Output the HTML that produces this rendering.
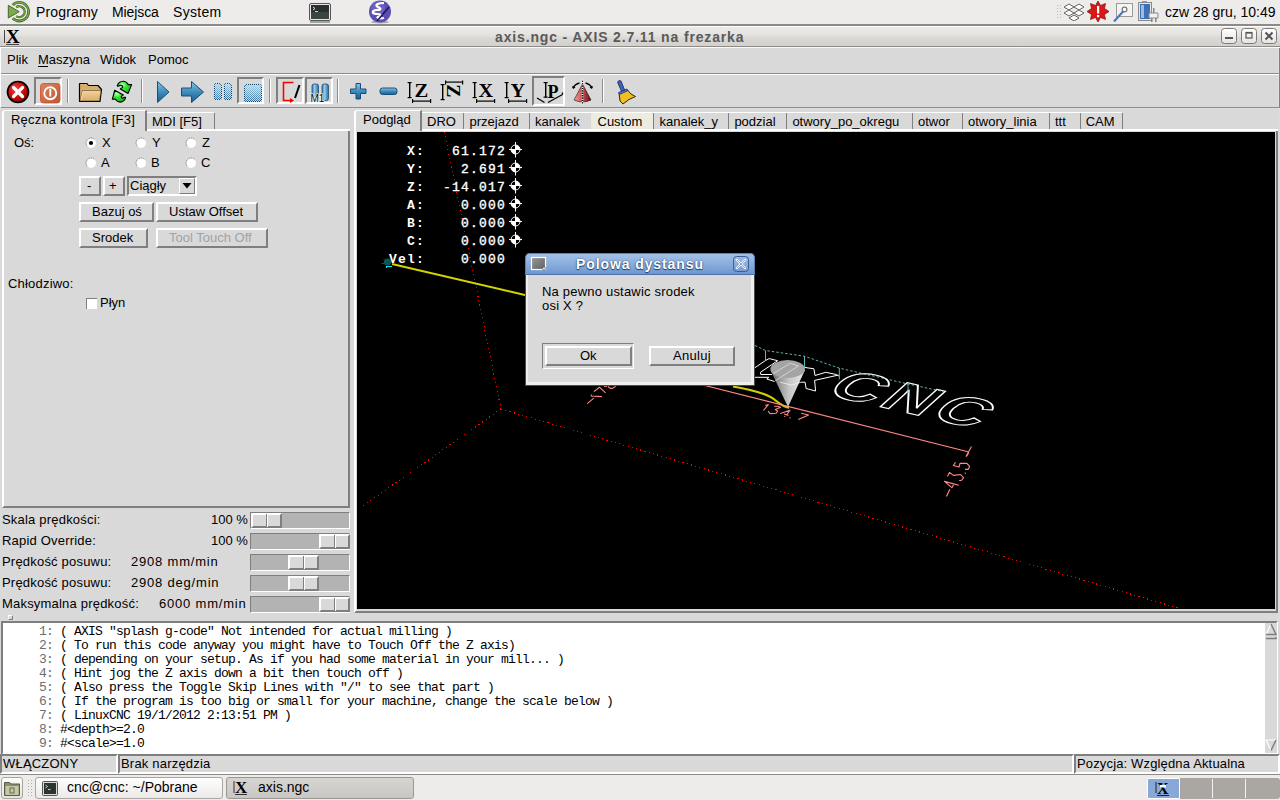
<!DOCTYPE html>
<html><head><meta charset="utf-8">
<style>
*{margin:0;padding:0;box-sizing:border-box}
html,body{width:1280px;height:800px;overflow:hidden;background:#d9d9d9;font-family:"Liberation Sans",sans-serif;font-size:13px;color:#000}
.a{position:absolute}
.t{position:absolute;white-space:pre;line-height:13px;font-size:13px}
.raised{position:absolute;background:#d9d9d9;border-style:solid;border-width:2px;border-color:#fff #7f7f7f #7f7f7f #fff}
.sunk{position:absolute;border-style:solid;border-width:2px;border-color:#7f7f7f #fff #fff #7f7f7f}
.sunk1{position:absolute;border-style:solid;border-width:1px;border-color:#7f7f7f #fff #fff #7f7f7f}
.mono{font-family:"Liberation Mono",monospace}
</style></head><body>

<!-- ===== TOP GNOME PANEL ===== -->
<div class="a" style="left:0;top:0;width:1280px;height:24px;background:#edeceb"></div>
<div class="a" style="left:0;top:24px;width:1280px;height:2px;background:#8e8a86"></div>

<svg class="a" style="left:4px;top:0" width="28" height="24" viewBox="0 0 28 24">
 <g fill="none" stroke-linecap="butt">
 <path d="M8.72 5.12 A9.3 9.3 0 1 1 8.72 18.28" stroke="#46682c" stroke-width="2.8"/>
 <path d="M8.72 5.12 A9.3 9.3 0 1 1 8.72 18.28" stroke="#7fb04c" stroke-width="1.1"/>
 <path d="M12.2 7.28 A5.4 5.4 0 1 1 12.2 16.12" stroke="#46682c" stroke-width="2.4"/>
 <path d="M12.2 7.28 A5.4 5.4 0 1 1 12.2 16.12" stroke="#7fb04c" stroke-width="1"/>
 </g>
 <path d="M4.3 5.3 L15.2 11.7 L4.3 18 Z" fill="#7aad45" stroke="#3f5a2a" stroke-width="0.9" stroke-linejoin="round"/>
</svg>
<div class="t" style="left:36px;top:5px;font-size:14px;line-height:14px;letter-spacing:0.15px">Programy</div>
<div class="t" style="left:112px;top:5px;font-size:14px;line-height:14px;letter-spacing:-0.1px">Miejsca</div>
<div class="t" style="left:173px;top:5px;font-size:14px;line-height:14px;letter-spacing:0.3px">System</div>
<svg class="a" style="left:308px;top:2px" width="24" height="21" viewBox="0 0 24 21">
 <rect x="1.5" y="1.5" width="21" height="17" rx="1.5" fill="#e8e8e8" stroke="#555" stroke-width="1"/>
 <rect x="3" y="3" width="18" height="14" fill="#2a302e"/>
 <rect x="3" y="10" width="18" height="7" fill="#3d4542"/>
 <path d="M5 5 L7 6.5 L5 8" fill="none" stroke="#ddd" stroke-width="1"/>
 <rect x="7" y="9" width="3" height="1" fill="#ccc"/>
 <rect x="2" y="19" width="20" height="2" fill="#777" opacity="0.6"/>
</svg>
<svg class="a" style="left:368px;top:0" width="24" height="24" viewBox="0 0 24 24">
 <ellipse cx="12" cy="22" rx="9" ry="1.5" fill="#333" opacity="0.35"/>
 <circle cx="12" cy="11.5" r="11" fill="#5a4fb0"/>
 <circle cx="10" cy="8" r="7" fill="#7a70c8" opacity="0.5"/>
 <path d="M16 3 C10 3 6 5 10 7 C14 9 13 10 8 10 C3 11 4 14 9 14 C14 14 14 16 10 17 C8 18 12 19 16 18" fill="none" stroke="#fff" stroke-width="2.2"/>
 <path d="M21 7 L9 21" stroke="#1a1860" stroke-width="1.6"/>
</svg>
<!-- tray -->
<div class="a" style="left:1056px;top:4px;width:5px;height:16px;background:radial-gradient(circle,#b8b6b2 0.6px,transparent 0.9px) 0 0/3px 3px"></div>
<svg class="a" style="left:1063px;top:3px" width="22" height="18" viewBox="0 0 22 18">
 <g fill="#fafafa" stroke="#555" stroke-width="0.9">
 <path d="M6 1 L11 4 L6 7 L1 4 Z"/><path d="M16 1 L21 4 L16 7 L11 4 Z"/>
 <path d="M6 7 L11 10 L6 13 L1 10 Z"/><path d="M16 7 L21 10 L16 13 L11 10 Z"/>
 <path d="M11 12 L16 15 L11 18 L6 15 Z"/></g>
</svg>
<svg class="a" style="left:1086px;top:0" width="24" height="24" viewBox="0 0 24 24">
 <path d="M12 1 L14.5 5.5 L19.5 3.5 L18.5 8.5 L23 11.5 L18.5 14.5 L19.5 19.5 L14.5 17.5 L12 22 L9.5 17.5 L4.5 19.5 L5.5 14.5 L1 11.5 L5.5 8.5 L4.5 3.5 L9.5 5.5 Z" fill="#d81818" stroke="#8a0c0c" stroke-width="0.7"/>
 <rect x="11" y="6" width="2.2" height="7.5" fill="#fff"/><rect x="11" y="15" width="2.2" height="2.2" fill="#fff"/>
</svg>
<svg class="a" style="left:1113px;top:3px" width="22" height="19" viewBox="0 0 22 19">
 <rect x="3.5" y="0.5" width="16" height="13" fill="#f4f4f2" stroke="#9a9a98"/>
 <circle cx="11.5" cy="6.5" r="2.4" fill="#fff" stroke="#777" stroke-width="1.2"/>
 <path d="M10.5 8 L1 18.5" stroke="#4a78c0" stroke-width="2.2"/>
</svg>
<svg class="a" style="left:1137px;top:0" width="24" height="24" viewBox="0 0 24 24">
 <rect x="5" y="1" width="5" height="2" fill="#9a9a9a"/>
 <rect x="1.5" y="2.5" width="13" height="18" fill="#e6e6e6" stroke="#8a8a8a"/>
 <rect x="3" y="4" width="10" height="15" fill="#3f6fb5"/>
 <rect x="4" y="5" width="3" height="13" fill="#9fbce0"/>
 <path d="M12 13 h9 v5 h-9 z" fill="#f0f0f0" stroke="#888"/>
 <rect x="14" y="18" width="1.6" height="4" fill="#888"/><rect x="18" y="18" width="1.6" height="4" fill="#888"/>
 <rect x="16" y="8" width="1.5" height="5" fill="#888"/>
</svg>
<div class="t" style="left:1165px;top:5px;font-size:14px;line-height:14px">czw 28 gru, 10:49</div>


<!-- ===== TITLE BAR ===== -->
<div class="a" style="left:0;top:26px;width:1280px;height:20px;background:linear-gradient(#ecebe9,#e4e3e0 45%,#dad8d4 60%,#d3d1cd)"></div>
<div class="a" style="left:0;top:26px;width:1280px;height:1px;background:#fbfbfa"></div>
<div class="a" style="left:0;top:46px;width:1280px;height:1px;background:#8e8a86"></div>
<div class="a" style="left:0;top:47px;width:1280px;height:1px;background:#fafafa"></div>
<div class="t" style="left:495px;top:30px;font-size:14px;line-height:14px;font-weight:bold;color:#5a5a5a;letter-spacing:0.85px">axis.ngc - AXIS 2.7.11 na frezarka</div>

<svg class="a" style="left:2px;top:27px" width="22" height="20" viewBox="0 0 22 20">
 <text x="4" y="16" font-family="Liberation Serif" font-weight="bold" font-size="19" fill="#000">X</text>
 <rect x="2" y="3" width="1" height="13" fill="#444"/>
 <rect x="4" y="17" width="13" height="1" fill="#444"/>
</svg>
<svg class="a" style="left:1220px;top:27px" width="58" height="18" viewBox="0 0 58 18">
 <defs><linearGradient id="wb" x1="0" y1="0" x2="0" y2="1"><stop offset="0" stop-color="#fff"/><stop offset="1" stop-color="#e4e3e1"/></linearGradient></defs>
 <rect x="1.5" y="1.5" width="15" height="15" rx="3" fill="url(#wb)" stroke="#7d7974"/>
 <rect x="5" y="10" width="8" height="2" fill="#555"/>
 <rect x="21.5" y="1.5" width="15" height="15" rx="3" fill="url(#wb)" stroke="#7d7974"/>
 <rect x="26" y="5.5" width="6" height="5.5" fill="none" stroke="#555" stroke-width="1.2"/><rect x="26" y="5" width="6" height="1.6" fill="#555"/>
 <rect x="41.5" y="1.5" width="15" height="15" rx="3" fill="url(#wb)" stroke="#7d7974"/>
 <path d="M45.5 5.5 L52.5 12.5 M52.5 5.5 L45.5 12.5" stroke="#555" stroke-width="2"/>
</svg>


<!-- ===== APP WINDOW ===== -->
<div class="a" style="left:0;top:47px;width:1px;height:60px;background:#fff"></div>
<div class="a" style="left:1278px;top:48px;width:1px;height:59px;background:#e0e0e0"></div>
<div class="a" style="left:1279px;top:48px;width:1px;height:60px;background:#7f7f7f"></div>
<div class="a" style="left:1278px;top:108px;width:2px;height:513px;background:#dcdcdc"></div>

<!-- menubar -->
<div class="a" style="left:1px;top:73px;width:1279px;height:1px;background:#8c8c8c"></div>
<div class="a" style="left:0;top:74px;width:1279px;height:1px;background:#fff"></div>
<div class="t" style="left:7px;top:53px">Plik</div>
<div class="t" style="left:38px;top:53px">Maszyna</div>
<div class="a" style="left:38px;top:66px;width:10px;height:1px;background:#000"></div>
<div class="t" style="left:100px;top:53px">Widok</div>
<div class="t" style="left:148px;top:53px">Pomoc</div>

<!-- toolbar bottom -->
<div class="a" style="left:1px;top:107px;width:1279px;height:1px;background:#8c8c8c"></div>
<div class="a" style="left:0;top:108px;width:1280px;height:1px;background:#dedede"></div>

<!-- stop -->
<svg class="a" style="left:5px;top:79px" width="26" height="26" viewBox="0 0 26 26">
 <defs><radialGradient id="rg1" cx="0.4" cy="0.35" r="0.7"><stop offset="0" stop-color="#f04040"/><stop offset="0.6" stop-color="#c80c0c"/><stop offset="1" stop-color="#7a0000"/></radialGradient></defs>
 <circle cx="13" cy="13" r="10.5" fill="url(#rg1)" stroke="#000" stroke-width="1.6"/>
 <path d="M8.5 8.5 L17.5 17.5 M17.5 8.5 L8.5 17.5" stroke="#fff" stroke-width="3.2" stroke-linecap="round"/>
</svg>
<div class="sunk" style="left:34px;top:77px;width:28px;height:28px"></div>
<svg class="a" style="left:40px;top:83px" width="21" height="21" viewBox="0 0 21 21">
 <defs><linearGradient id="lg1" x1="0" y1="0" x2="1" y2="1"><stop offset="0" stop-color="#e0845a"/><stop offset="1" stop-color="#b85a35"/></linearGradient></defs>
 <rect x="0.5" y="0.5" width="19.5" height="19.5" rx="3" fill="url(#lg1)" stroke="#d24a2a" stroke-width="0.8"/>
 <circle cx="10.25" cy="10.25" r="6" fill="none" stroke="#fff" stroke-width="1.8"/>
 <rect x="9.4" y="6" width="1.8" height="7.5" fill="#fff"/>
</svg>
<div class="a" style="left:67px;top:79px;width:1px;height:24px;background:#8c8c8c"></div><div class="a" style="left:68px;top:79px;width:1px;height:24px;background:#fff"></div>
<!-- folder -->
<svg class="a" style="left:78px;top:82px" width="25" height="21" viewBox="0 0 25 21">
 <defs><linearGradient id="fg" x1="0" y1="0" x2="0" y2="1"><stop offset="0" stop-color="#f2d39c"/><stop offset="1" stop-color="#d9ad6a"/></linearGradient></defs>
 <path d="M1.5 1.5 H9 L10.5 3.5 H20 L23.5 7.5 L22 19.5 H1.5 Z" fill="#d8ae6e" stroke="#000" stroke-width="1.2" stroke-linejoin="round"/>
 <path d="M2 19 L4.5 8.5 H23 L21.5 19 Z" fill="url(#fg)" stroke="#3a2a10" stroke-width="0.5"/>
 <path d="M3 18.5 L5 9.5" stroke="#fff4dc" stroke-width="0.8" opacity="0.8"/>
</svg>
<!-- reload -->
<svg class="a" style="left:110px;top:79px" width="24" height="25" viewBox="0 0 24 25">
 <defs><radialGradient id="gg" cx="0.35" cy="0.3" r="0.8"><stop offset="0" stop-color="#c8ffc8"/><stop offset="0.35" stop-color="#38e838"/><stop offset="1" stop-color="#10b010"/></radialGradient></defs>
 <path d="M7.2 6.7 C8 4.5 10.5 2.5 13.1 2.3 C15 2.2 17.2 3.8 18.4 5.6 L21.6 5.6 L18.1 14.4 L10.3 10 L12.5 8.4 C12.8 7.6 12.6 7 12.2 6.9 C11.5 6.3 10.8 6.3 10.3 6.4 C9.3 6.6 8.5 7 7.8 7.3 Z" fill="url(#gg)" stroke="#000" stroke-width="1.1" stroke-linejoin="round"/>
 <path d="M15.6 18.4 C15.2 20.3 14.5 21.1 13.75 21.6 C12.7 22.6 11.4 23.1 10.3 23.1 C8.9 23.1 7.8 22.6 6.9 21.9 C6.2 21.3 5.6 20.6 5.3 20 L2.3 20.3 L4.7 11.25 L13.4 15.9 L11.25 17.5 C11.3 18.3 11.5 18.9 11.9 19.1 C12.6 19.3 13.4 18.9 14 18.4 Z" fill="url(#gg)" stroke="#000" stroke-width="1.1" stroke-linejoin="round"/>
</svg>
<div class="a" style="left:141px;top:79px;width:1px;height:24px;background:#8c8c8c"></div><div class="a" style="left:142px;top:79px;width:1px;height:24px;background:#fff"></div>
<!-- play -->
<svg class="a" style="left:155px;top:80px" width="16" height="24" viewBox="0 0 16 24">
 <defs><linearGradient id="bl" x1="0" y1="0" x2="0" y2="1"><stop offset="0" stop-color="#8cc4e4"/><stop offset="0.5" stop-color="#3c8cbc"/><stop offset="1" stop-color="#1c5c8c"/></linearGradient></defs>
 <path d="M2.5 1.5 L14 12 L2.5 22.5 Z" fill="url(#bl)" stroke="#1a4e78" stroke-width="1" stroke-linejoin="round"/>
</svg>
<svg class="a" style="left:180px;top:80px" width="25" height="24" viewBox="0 0 25 24">
 <path d="M1.5 8 h10 v-6.5 L23.5 12 L11.5 22.5 v-6.5 h-10 z" fill="url(#bl)" stroke="#1a4e78" stroke-width="1" stroke-linejoin="round"/>
</svg>
<!-- pause dotted -->
<svg class="a" style="left:212px;top:82px" width="21" height="20" viewBox="0 0 21 20">
 <defs>
  <pattern id="ck" width="2" height="2" patternUnits="userSpaceOnUse"><rect width="1" height="1" fill="#fff"/><rect x="1" y="1" width="1" height="1" fill="#fff"/></pattern>
  <mask id="ckm"><rect width="40" height="40" fill="url(#ck)"/></mask>
  <linearGradient id="pg" x1="0" y1="0" x2="0" y2="1"><stop offset="0" stop-color="#b8e0ee"/><stop offset="1" stop-color="#2a6a9c"/></linearGradient>
 </defs>
 <g mask="url(#ckm)">
  <rect x="2" y="1" width="8" height="17" rx="2" fill="url(#pg)"/>
  <rect x="12" y="1" width="8" height="17" rx="2" fill="url(#pg)"/>
  <rect x="2.5" y="1.5" width="7" height="16" rx="2" fill="none" stroke="#0e3c64" stroke-width="1"/>
  <rect x="12.5" y="1.5" width="7" height="16" rx="2" fill="none" stroke="#0e3c64" stroke-width="1"/>
 </g>
</svg>
<div class="sunk" style="left:237px;top:77px;width:27px;height:27px"></div>
<svg class="a" style="left:243px;top:83px" width="20" height="20" viewBox="0 0 20 20">
 <g mask="url(#ckm)">
  <rect x="1" y="1" width="18" height="18" rx="2.5" fill="url(#pg)"/>
  <rect x="1.5" y="1.5" width="17" height="17" rx="2.5" fill="none" stroke="#0e3c64" stroke-width="1"/>
 </g>
</svg>
<div class="a" style="left:269px;top:79px;width:1px;height:24px;background:#8c8c8c"></div><div class="a" style="left:270px;top:79px;width:1px;height:24px;background:#fff"></div>
<div class="sunk" style="left:276px;top:77px;width:28px;height:27px"></div>
<svg class="a" style="left:280px;top:80px" width="22" height="23" viewBox="0 0 22 23">
 <path d="M13.5 2.5 H3.5 V20.5 H11" fill="none" stroke="#f00" stroke-width="1.6"/>
 <path d="M10 18 L14 20.5 L10 23 Z" fill="#f00"/>
 <path d="M19.5 5 L15 18" stroke="#000" stroke-width="2"/>
</svg>
<div class="sunk" style="left:305px;top:77px;width:28px;height:27px"></div>
<svg class="a" style="left:310px;top:83px" width="21" height="20" viewBox="0 0 21 20">
 <defs><linearGradient id="bb" x1="0" y1="0" x2="1" y2="0"><stop offset="0" stop-color="#3a7ab0"/><stop offset="0.4" stop-color="#9ccae6"/><stop offset="1" stop-color="#2a6aa0"/></linearGradient></defs>
 <rect x="2" y="1" width="6.5" height="16.5" rx="2" fill="url(#bb)" stroke="#1a4e78" stroke-width="0.8"/>
 <rect x="12" y="1" width="6.5" height="16.5" rx="2" fill="url(#bb)" stroke="#1a4e78" stroke-width="0.8"/>
 <text x="0.5" y="18.8" font-family="Liberation Sans" font-size="10" fill="#000" stroke="#fff" stroke-width="1.2" paint-order="stroke">M1</text>
</svg>
<div class="a" style="left:337px;top:79px;width:1px;height:24px;background:#8c8c8c"></div><div class="a" style="left:338px;top:79px;width:1px;height:24px;background:#fff"></div>
<!-- plus minus -->
<svg class="a" style="left:349px;top:82px" width="20" height="20" viewBox="0 0 20 20">
 <path d="M7 1.5 h4.5 v5.5 h5.5 v4.5 h-5.5 v5.5 h-4.5 v-5.5 h-5.5 v-4.5 h5.5 z" fill="url(#bl)" stroke="#1a4e78" stroke-width="1" stroke-linejoin="round"/>
</svg>
<svg class="a" style="left:379px;top:87px" width="20" height="10" viewBox="0 0 20 10">
 <rect x="1" y="1" width="17" height="6.5" rx="2.5" fill="url(#bl)" stroke="#1a4e78" stroke-width="1"/>
</svg>
<!-- view icons -->
<svg class="a" style="left:405px;top:79px" width="130" height="26" viewBox="0 0 130 26">
 <g fill="#000" font-family="Liberation Serif" font-weight="bold">
  <rect x="4" y="3" width="1.4" height="16"/><rect x="2.6" y="3" width="4" height="1.2"/><rect x="2.6" y="18" width="4" height="1.2"/>
  <text font-size="18" transform="translate(9.5,17.5) scale(1.15,1)">Z</text>
  <rect x="7" y="21.5" width="19" height="1.2"/><rect x="7" y="20" width="1.2" height="4"/><rect x="25" y="20" width="1.2" height="4"/>
  <rect x="37" y="5" width="1.4" height="16"/><rect x="35.6" y="5" width="4" height="1.2"/><rect x="35.6" y="20" width="4" height="1.2"/>
  <rect x="40" y="2.5" width="18" height="1.2"/><rect x="40" y="1.5" width="1.2" height="4"/><rect x="57" y="1.5" width="1.2" height="4"/>
  <text font-size="18" transform="translate(48,12.5) rotate(90) scale(1.1,1) translate(-6.5,6.5)">Z</text>
  <rect x="69" y="3" width="1.4" height="16"/><rect x="67.6" y="3" width="4" height="1.2"/><rect x="67.6" y="18" width="4" height="1.2"/>
  <text font-size="18" transform="translate(73.5,17.5) scale(1.12,1)">X</text>
  <rect x="71" y="21.5" width="19" height="1.2"/><rect x="71" y="20" width="1.2" height="4"/><rect x="89" y="20" width="1.2" height="4"/>
  <rect x="101" y="3" width="1.4" height="16"/><rect x="99.6" y="3" width="4" height="1.2"/><rect x="99.6" y="18" width="4" height="1.2"/>
  <text font-size="18" transform="translate(105.5,17.5) scale(1.12,1)">Y</text>
  <rect x="103" y="21.5" width="19" height="1.2"/><rect x="103" y="20" width="1.2" height="4"/><rect x="121" y="20" width="1.2" height="4"/>
 </g>
</svg>
<div class="sunk" style="left:532px;top:76px;width:33px;height:30px"></div>
<svg class="a" style="left:534px;top:79px" width="30" height="26" viewBox="0 0 30 26">
 <g fill="#000">
 <rect x="11" y="3" width="1.4" height="15.5"/><rect x="9.6" y="3" width="4" height="1.2"/><rect x="9.6" y="17.5" width="4" height="1.2"/>
 <text x="13.5" y="18.5" font-family="Liberation Serif" font-weight="bold" font-size="18">P</text>
 </g>
 <path d="M3 19 L10.5 23.5 M14 23.5 L28.5 15.5 M28.5 15.5 V13.5" stroke="#000" stroke-width="1.3" fill="none"/>
</svg>
<!-- cone -->
<svg class="a" style="left:571px;top:79px" width="24" height="26" viewBox="0 0 24 26">
 <defs><linearGradient id="cg" x1="0" y1="0" x2="1" y2="0"><stop offset="0" stop-color="#f0a0a0"/><stop offset="0.5" stop-color="#c85050"/><stop offset="1" stop-color="#601010"/></linearGradient></defs>
 <path d="M11.5 5 L3 21 Q11.5 25 20 21 Z" fill="url(#cg)" stroke="#2a0a0a" stroke-width="0.6"/>
 <path d="M2 9 Q4 5 8.5 4 M21 9 Q19 5 14.5 4" stroke="#000" stroke-width="1.4" fill="none"/>
 <path d="M1 7 L2 10 L4.5 8.5 Z M22 7 L21 10 L18.5 8.5 Z" fill="#000"/>
 <path d="M11.5 0.5 V25.5" stroke="#fff" stroke-width="1.4" stroke-dasharray="1.2 1.2"/>
 <path d="M11.5 0.5 V25.5" stroke="#000" stroke-width="1" stroke-dasharray="1.2 1.2" stroke-dashoffset="1.2"/>
</svg>
<div class="a" style="left:602px;top:79px;width:1px;height:24px;background:#8c8c8c"></div><div class="a" style="left:603px;top:79px;width:1px;height:24px;background:#fff"></div>
<!-- brush -->
<svg class="a" style="left:614px;top:79px" width="24" height="26" viewBox="0 0 24 26">
 <path d="M3.5 3 Q5 0.5 7 2 L11 12 L8 13.5 Z" fill="#3c64c0" stroke="#101c50" stroke-width="0.8"/>
 <path d="M5 14 L13 10.5 L17 15 L21.5 17.5 L15 20.5 L9 25 L6 22 Z" fill="#f0c020" stroke="#201000" stroke-width="0.9" stroke-linejoin="round"/>
 <path d="M4.5 13.5 L13 10 L13.8 11.8 L5.5 15.5 Z" fill="#4a70c8" stroke="#101c50" stroke-width="0.6"/>
</svg>


<!-- ===== LEFT NOTEBOOK ===== -->
<div class="a" style="left:2px;top:129px;width:348px;height:379px;border-style:solid;border-width:2px;border-color:#fff #7f7f7f #7f7f7f #fff"></div>

<!-- tabs -->
<div class="a" style="left:2px;top:110px;width:145px;height:21px;background:#d9d9d9;border-style:solid;border-color:#fff #7f7f7f transparent #fff;border-width:1px 2px 0 2px;border-top-left-radius:3px"></div>
<div class="t" style="left:11px;top:113px;letter-spacing:0.2px">Ręczna kontrola [F3]</div>
<div class="a" style="left:147px;top:112px;width:68px;height:17px;border-style:solid;border-color:#fff #7f7f7f transparent transparent;border-width:1px 1px 0 0;border-top-right-radius:2px"></div>
<div class="t" style="left:152px;top:115px">MDI [F5]</div>
<div class="a" style="left:147px;top:129px;width:203px;height:2px;background:#fff"></div>
<!-- axis radios -->
<div class="t" style="left:14px;top:136px">Oś:</div>
<svg class="a" style="left:84px;top:136px" width="130" height="34" viewBox="0 0 130 34">
 <g fill="#fff"><circle cx="7" cy="7" r="5"/><circle cx="57" cy="7" r="5"/><circle cx="107" cy="7" r="5"/>
 <circle cx="7" cy="27" r="5"/><circle cx="57" cy="27" r="5"/><circle cx="107" cy="27" r="5"/></g>
 <g fill="none" stroke="#6a6a6a" stroke-width="0.8" stroke-dasharray="1.2 0.6">
 <path d="M3.2 10.2 A5 5 0 0 1 10.5 3.4"/><path d="M53.2 10.2 A5 5 0 0 1 60.5 3.4"/><path d="M103.2 10.2 A5 5 0 0 1 110.5 3.4"/>
 <path d="M3.2 30.2 A5 5 0 0 1 10.5 23.4"/><path d="M53.2 30.2 A5 5 0 0 1 60.5 23.4"/><path d="M103.2 30.2 A5 5 0 0 1 110.5 23.4"/></g>
 <circle cx="7" cy="7" r="2.1" fill="#000"/>
</svg>
<div class="t" style="left:102px;top:136px">X</div>
<div class="t" style="left:152px;top:136px">Y</div>
<div class="t" style="left:202px;top:136px">Z</div>
<div class="t" style="left:101px;top:156px">A</div>
<div class="t" style="left:151px;top:156px">B</div>
<div class="t" style="left:201px;top:156px">C</div>
<!-- jog buttons -->
<div class="raised" style="left:79px;top:176px;width:22px;height:20px"></div>
<div class="t" style="left:87px;top:179px">-</div>
<div class="raised" style="left:103px;top:176px;width:22px;height:20px"></div>
<div class="t" style="left:109px;top:179px">+</div>
<div class="sunk" style="left:127px;top:176px;width:70px;height:20px"></div>
<div class="t" style="left:130px;top:179px">Ciągły</div>
<div class="raised" style="left:179px;top:178px;width:16px;height:16px;border-width:1px"></div>
<svg class="a" style="left:181px;top:182px" width="12" height="8"><path d="M1.5 1 H10.5 L6 6.5 Z" fill="#000"/></svg>
<div class="raised" style="left:79px;top:202px;width:75px;height:20px"></div>
<div class="t" style="left:92px;top:205px">Bazuj oś</div>
<div class="raised" style="left:156px;top:202px;width:102px;height:20px"></div>
<div class="t" style="left:169px;top:205px">Ustaw Offset</div>
<div class="raised" style="left:79px;top:228px;width:69px;height:20px"></div>
<div class="t" style="left:92px;top:231px">Srodek</div>
<div class="raised" style="left:156px;top:228px;width:112px;height:20px"></div>
<div class="t" style="left:169px;top:231px;color:#a3a3a3">Tool Touch Off</div>
<!-- coolant -->
<div class="t" style="left:8px;top:277px;letter-spacing:0.2px">Chłodziwo:</div>
<div class="a" style="left:86px;top:298px;width:11px;height:11px;background:#fff;border-style:solid;border-width:1px 0 0 1px;border-color:#808080"></div>
<div class="t" style="left:100px;top:296px">Płyn</div>
<!-- sliders -->
<div class="t" style="left:2px;top:513px;letter-spacing:0.2px">Skala prędkości:</div>
<div class="t" style="left:211px;top:513px">100 %</div>
<div class="t" style="left:2px;top:534px;letter-spacing:0.2px">Rapid Override:</div>
<div class="t" style="left:211px;top:534px">100 %</div>
<div class="t" style="left:2px;top:555px;letter-spacing:0.2px">Prędkość posuwu:</div>
<div class="t" style="left:131px;top:555px;letter-spacing:0.8px">2908 mm/min</div>
<div class="t" style="left:2px;top:576px;letter-spacing:0.2px">Prędkość posuwu:</div>
<div class="t" style="left:131px;top:576px;letter-spacing:0.8px">2908 deg/min</div>
<div class="t" style="left:2px;top:597px;letter-spacing:0.2px">Maksymalna prędkość:</div>
<div class="t" style="left:159px;top:597px;letter-spacing:0.8px">6000 mm/min</div>
<div class="sunk1" style="left:250px;top:512px;width:100px;height:17px;background:#b3b3b3"></div>
<div class="raised" style="left:251px;top:513px;width:31px;height:15px"></div>
<div class="a" style="left:266px;top:514px;width:1px;height:13px;background:#7f7f7f"></div><div class="a" style="left:267px;top:514px;width:1px;height:13px;background:#fff"></div>
<div class="sunk1" style="left:250px;top:533px;width:100px;height:17px;background:#b3b3b3"></div>
<div class="raised" style="left:319px;top:534px;width:31px;height:15px"></div>
<div class="a" style="left:334px;top:535px;width:1px;height:13px;background:#7f7f7f"></div><div class="a" style="left:335px;top:535px;width:1px;height:13px;background:#fff"></div>
<div class="sunk1" style="left:250px;top:554px;width:100px;height:17px;background:#b3b3b3"></div>
<div class="raised" style="left:288px;top:555px;width:31px;height:15px"></div>
<div class="a" style="left:303px;top:556px;width:1px;height:13px;background:#7f7f7f"></div><div class="a" style="left:304px;top:556px;width:1px;height:13px;background:#fff"></div>
<div class="sunk1" style="left:250px;top:575px;width:100px;height:17px;background:#b3b3b3"></div>
<div class="raised" style="left:288px;top:576px;width:31px;height:15px"></div>
<div class="a" style="left:303px;top:577px;width:1px;height:13px;background:#7f7f7f"></div><div class="a" style="left:304px;top:577px;width:1px;height:13px;background:#fff"></div>
<div class="sunk1" style="left:250px;top:596px;width:100px;height:17px;background:#b3b3b3"></div>
<div class="raised" style="left:319px;top:597px;width:31px;height:15px"></div>
<div class="a" style="left:334px;top:598px;width:1px;height:13px;background:#7f7f7f"></div><div class="a" style="left:335px;top:598px;width:1px;height:13px;background:#fff"></div>
<div class="a" style="left:8px;top:615px;width:5px;height:5px;border-style:solid;border-width:1px;border-color:#fff #7f7f7f #7f7f7f #fff"></div>


<!-- ===== RIGHT NOTEBOOK ===== -->
<div class="a" style="left:354px;top:129px;width:924px;height:484px;border-style:solid;border-width:2px;border-color:#fff #7f7f7f #7f7f7f #fff"></div>
<div class="a" style="left:357px;top:132px;width:918px;height:477px;background:#000;overflow:hidden" id="gl"></div>
<svg class="a" style="left:357px;top:132px" width="918" height="477" viewBox="357 132 918 477">
 <g stroke="#ff0000" stroke-width="1.1" stroke-dasharray="1.1 3.3" fill="none" shape-rendering="crispEdges">
  <path d="M444.3 132 L501 409"/>
  <path d="M501 409 L357 510"/>
  <path d="M501 409 L1180 608.5"/>
 </g>
 <path d="M392 264 L527 295.5" stroke="#d4d400" stroke-width="2"/>
 <path d="M733 386.5 Q765 392 775 400 T789 407.5" stroke="#d0d000" stroke-width="2.2" fill="none"/>
 <g stroke="#ff8888" stroke-width="1.1" fill="none">
  <path d="M700 384.3 L969 452"/>
  <path d="M971.5 446.5 L966 456.5"/>
 </g>
 <g stroke="#5fb0b0" stroke-width="1" stroke-dasharray="2.5 2" fill="none">
  <path d="M755 345.5 L765.4 350.5 L804.4 356.2 L839.2 368.1 L908 384 L943 391.5"/>
 </g>
 <circle cx="387.5" cy="262" r="3.6" fill="#0b5656"/><path d="M381.5 263.5 h3 M384 258.5 v1" stroke="#0b5656" stroke-width="1"/><path d="M386.5 268 v-1.5 h5.5" stroke="#00f0f0" stroke-width="1.2" fill="none"/>
 <!-- splash text outlines -->
 <g fill="none" stroke="#fff" stroke-width="1">
  <text font-family="Liberation Sans" font-weight="bold" font-size="40" letter-spacing="3.2" transform="matrix(1.62,0.37,-0.98,0.88,824,394)">CNC</text>
  <path d="M754.8 367.8 L765.7 360.4 L769.2 358.6 L777.7 360.7 L760.4 372.3 L760.8 374.5 L772 374.5 M754.8 377.3 L768.9 377.3 L766.8 379 L774.5 381.5 M804.4 367.4 L813.9 368.8 L815 375.5 L825.8 372.3 L836.4 374.5 L839 376 M837.8 375.2 L814.6 380.4 L815.6 391 L806.1 388.5 L805.1 382.2 L801.2 382.2"/>
 </g>
 <!-- cone -->
 <defs><linearGradient id="cone" x1="0" y1="0" x2="1" y2="0"><stop offset="0" stop-color="#6c6c6c"/><stop offset="0.55" stop-color="#c8c8c8"/><stop offset="1" stop-color="#e8e8e8"/></linearGradient></defs>
 <path d="M770.5 370 L788 407 L805 370 Z" fill="url(#cone)"/>
 <ellipse cx="787.7" cy="369" rx="17.3" ry="9" fill="#a4a4a4"/>
 <path d="M780.1 382.2 L791.4 385 L801.2 382.2" stroke="#f0f0f0" stroke-width="1" fill="none" opacity="0.85"/>
 <path d="M773.1 373.8 L790.3 363.2 L798.4 366 L775.2 380.8" stroke="#e8e8e8" stroke-width="1" fill="none" opacity="0.7"/>
 <!-- cyan rapid -->
 <g stroke="#6ab8b8" stroke-width="1" fill="none"><path d="M765.5 350.5 V360.4 M804.5 356.2 V367 M839.3 368 V379.4 M908 384 V393"/></g>
 <!-- pink labels -->
 <g fill="none" stroke="#ff8c8c" stroke-width="1.1" stroke-linejoin="round">
  <path d="M763.4 410.5 L768.5 404.4 M765.3 405.4 L768.5 404.4"/>
  <path d="M774.2 406.3 L777.7 406.3 L780.5 407.3 L775.3 409.6 L777.7 411 L776 413.3 L770.2 413.6 L768.1 411.2"/>
  <path d="M780.3 413.6 L789.9 410.3 L787.5 413.8 L784.3 416.6 M784 414 L788.5 415.5"/>
  <path d="M790 417.3 V418.6"/>
  <path d="M801.1 413.3 L808.6 415 L798.3 419.4"/>
  <path d="M946.5 496.4 L949.8 489.2"/>
  <path d="M958.8 485.3 L944.4 481.4 L951.9 487.7 L954 483.8"/>
  <path d="M947.4 476.6 L949.5 472.4 L953.4 475.4 L960.6 474.5 L963.6 477.8 L961.2 480.5 L959.1 480.5"/>
  <path d="M964.6 473.3 H966"/>
  <path d="M955.5 462.2 L953.4 465.5 L959.1 467 L960 463.4 L966.9 463.4 L969.6 466.4 L968.1 469.4 L965.1 469.4"/>
  <path d="M966.3 456.5 L968.7 452.9"/>
  <path d="M587.2 403.6 L593.8 398.1"/>
  <path d="M591.3 394.5 L591.3 396 L601.9 396.6"/>
  <path d="M594 391.6 L599.4 387.2 L605.6 392.8"/>
  <path d="M604 386.3 H607 M608 386.5 L610.3 388.4 L612.5 388.4 L615.6 386.3"/>
 </g>
</svg>
<div class="t mono" style="left:389px;top:145px;color:#fff;letter-spacing:1.2px;font-size:13px"><b>  X:</b><span style="-webkit-text-stroke:0.35px #fff">   61.172</span></div>
<svg class="a" style="left:507px;top:141px" width="16" height="17" viewBox="0 0 16 17"><circle cx="8.5" cy="8.5" r="4.5" fill="none" stroke="#fff" stroke-width="1"/><path d="M8.5 8.5 V4 A4.5 4.5 0 0 1 13 8.5 Z M8.5 8.5 V13 A4.5 4.5 0 0 1 4 8.5 Z" fill="#fff"/><path d="M8.5 1 V16.5 M2 8.5 H15" stroke="#fff" stroke-width="1"/></svg>
<div class="t mono" style="left:389px;top:163px;color:#fff;letter-spacing:1.2px;font-size:13px"><b>  Y:</b><span style="-webkit-text-stroke:0.35px #fff">    2.691</span></div>
<svg class="a" style="left:507px;top:159px" width="16" height="17" viewBox="0 0 16 17"><circle cx="8.5" cy="8.5" r="4.5" fill="none" stroke="#fff" stroke-width="1"/><path d="M8.5 8.5 V4 A4.5 4.5 0 0 1 13 8.5 Z M8.5 8.5 V13 A4.5 4.5 0 0 1 4 8.5 Z" fill="#fff"/><path d="M8.5 1 V16.5 M2 8.5 H15" stroke="#fff" stroke-width="1"/></svg>
<div class="t mono" style="left:389px;top:181px;color:#fff;letter-spacing:1.2px;font-size:13px"><b>  Z:</b><span style="-webkit-text-stroke:0.35px #fff">  -14.017</span></div>
<svg class="a" style="left:507px;top:177px" width="16" height="17" viewBox="0 0 16 17"><circle cx="8.5" cy="8.5" r="4.5" fill="none" stroke="#fff" stroke-width="1"/><path d="M8.5 8.5 V4 A4.5 4.5 0 0 1 13 8.5 Z M8.5 8.5 V13 A4.5 4.5 0 0 1 4 8.5 Z" fill="#fff"/><path d="M8.5 1 V16.5 M2 8.5 H15" stroke="#fff" stroke-width="1"/></svg>
<div class="t mono" style="left:389px;top:199px;color:#fff;letter-spacing:1.2px;font-size:13px"><b>  A:</b><span style="-webkit-text-stroke:0.35px #fff">    0.000</span></div>
<svg class="a" style="left:507px;top:195px" width="16" height="17" viewBox="0 0 16 17"><circle cx="8.5" cy="8.5" r="4.5" fill="none" stroke="#fff" stroke-width="1"/><path d="M8.5 8.5 V4 A4.5 4.5 0 0 1 13 8.5 Z M8.5 8.5 V13 A4.5 4.5 0 0 1 4 8.5 Z" fill="#fff"/><path d="M8.5 1 V16.5 M2 8.5 H15" stroke="#fff" stroke-width="1"/></svg>
<div class="t mono" style="left:389px;top:217px;color:#fff;letter-spacing:1.2px;font-size:13px"><b>  B:</b><span style="-webkit-text-stroke:0.35px #fff">    0.000</span></div>
<svg class="a" style="left:507px;top:213px" width="16" height="17" viewBox="0 0 16 17"><circle cx="8.5" cy="8.5" r="4.5" fill="none" stroke="#fff" stroke-width="1"/><path d="M8.5 8.5 V4 A4.5 4.5 0 0 1 13 8.5 Z M8.5 8.5 V13 A4.5 4.5 0 0 1 4 8.5 Z" fill="#fff"/><path d="M8.5 1 V16.5 M2 8.5 H15" stroke="#fff" stroke-width="1"/></svg>
<div class="t mono" style="left:389px;top:235px;color:#fff;letter-spacing:1.2px;font-size:13px"><b>  C:</b><span style="-webkit-text-stroke:0.35px #fff">    0.000</span></div>
<svg class="a" style="left:507px;top:231px" width="16" height="17" viewBox="0 0 16 17"><circle cx="8.5" cy="8.5" r="4.5" fill="none" stroke="#fff" stroke-width="1"/><path d="M8.5 8.5 V4 A4.5 4.5 0 0 1 13 8.5 Z M8.5 8.5 V13 A4.5 4.5 0 0 1 4 8.5 Z" fill="#fff"/><path d="M8.5 1 V16.5 M2 8.5 H15" stroke="#fff" stroke-width="1"/></svg>
<div class="t mono" style="left:389px;top:253px;color:#fff;letter-spacing:1.2px;font-size:13px"><b>Vel:</b><span style="-webkit-text-stroke:0.35px #fff">    0.000</span></div>
<div class="a" style="left:354px;top:110px;width:68px;height:21px;background:#d9d9d9;border-style:solid;border-color:#fff #7f7f7f transparent #fff;border-width:1px 2px 0 2px;border-top-left-radius:3px"></div>
<div class="t" style="left:363px;top:113px">Podgląd</div>
<div class="a" style="left:422px;top:112px;width:42px;height:17px;background:transparent;border-style:solid;border-color:#fff #7f7f7f transparent transparent;border-width:1px 1px 0 0;border-top-right-radius:2px"></div>
<div class="t" style="left:427px;top:115px">DRO</div>
<div class="a" style="left:463px;top:112px;width:67px;height:17px;background:transparent;border-style:solid;border-color:#fff #7f7f7f transparent transparent;border-width:1px 1px 0 0;border-top-right-radius:2px"></div>
<div class="t" style="left:469.5px;top:115px">przejazd</div>
<div class="a" style="left:529px;top:112px;width:63px;height:17px;background:transparent;border-style:solid;border-color:#fff #7f7f7f transparent transparent;border-width:1px 1px 0 0;border-top-right-radius:2px"></div>
<div class="t" style="left:535px;top:115px">kanalek</div>
<div class="a" style="left:591px;top:112px;width:63px;height:17px;background:#ebebdf;border-style:solid;border-color:#fff #7f7f7f transparent transparent;border-width:1px 1px 0 0;border-top-right-radius:2px"></div>
<div class="t" style="left:597.5px;top:115px">Custom</div>
<div class="a" style="left:653px;top:112px;width:76px;height:17px;background:transparent;border-style:solid;border-color:#fff #7f7f7f transparent transparent;border-width:1px 1px 0 0;border-top-right-radius:2px"></div>
<div class="t" style="left:659.5px;top:115px">kanalek_y</div>
<div class="a" style="left:728px;top:112px;width:59px;height:17px;background:transparent;border-style:solid;border-color:#fff #7f7f7f transparent transparent;border-width:1px 1px 0 0;border-top-right-radius:2px"></div>
<div class="t" style="left:734.4px;top:115px">podzial</div>
<div class="a" style="left:786px;top:112px;width:127px;height:17px;background:transparent;border-style:solid;border-color:#fff #7f7f7f transparent transparent;border-width:1px 1px 0 0;border-top-right-radius:2px"></div>
<div class="t" style="left:792.4px;top:115px">otwory_po_okregu</div>
<div class="a" style="left:912px;top:112px;width:51px;height:17px;background:transparent;border-style:solid;border-color:#fff #7f7f7f transparent transparent;border-width:1px 1px 0 0;border-top-right-radius:2px"></div>
<div class="t" style="left:918px;top:115px">otwor</div>
<div class="a" style="left:962px;top:112px;width:88px;height:17px;background:transparent;border-style:solid;border-color:#fff #7f7f7f transparent transparent;border-width:1px 1px 0 0;border-top-right-radius:2px"></div>
<div class="t" style="left:968px;top:115px">otwory_linia</div>
<div class="a" style="left:1049px;top:112px;width:32px;height:17px;background:transparent;border-style:solid;border-color:#fff #7f7f7f transparent transparent;border-width:1px 1px 0 0;border-top-right-radius:2px"></div>
<div class="t" style="left:1055px;top:115px">ttt</div>
<div class="a" style="left:1080px;top:112px;width:43px;height:17px;background:transparent;border-style:solid;border-color:#fff #7f7f7f transparent transparent;border-width:1px 1px 0 0;border-top-right-radius:2px"></div>
<div class="t" style="left:1085.7px;top:115px">CAM</div>
<div class="a" style="left:422px;top:129px;width:856px;height:2px;background:#fff"></div>

<!-- ===== TEXT AREA ===== -->
<div class="a" style="left:1px;top:621px;width:1277px;height:134px;background:#fff;border-style:solid;border-width:2px;border-color:#7f7f7f #fff #fff #7f7f7f"></div>
<div class="a" style="left:1265px;top:623px;width:12px;height:130px;background:#d9d9d9"></div>
<svg class="a" style="left:1265px;top:623px" width="12" height="130" viewBox="0 0 12 130"><path d="M1 11.5 L6 1 L11 11.5 Z" fill="#d9d9d9"/><path d="M1 11.5 L6 1" stroke="#fff" stroke-width="1.2"/><path d="M6 1 L11 11.5 H1" stroke="#7f7f7f" stroke-width="1.5" fill="none"/><path d="M1 15.5 H11 V14" stroke="#7f7f7f" stroke-width="1.5" fill="none"/><path d="M1 117 L6 127.5 L11 117 Z" fill="#d9d9d9"/><path d="M1 117 H11 M1 117 L6 127.5" stroke="#fff" stroke-width="1.2" fill="none"/><path d="M11 117 L6 127.5" stroke="#7f7f7f" stroke-width="1.5"/></svg>
<div class="t mono" style="left:4px;top:625px;font-size:13px;line-height:14px;letter-spacing:-0.8px"><span style="color:#6e6e6e">     1:</span> ( AXIS "splash g-code" Not intended for actual milling )</div>
<div class="t mono" style="left:4px;top:639px;font-size:13px;line-height:14px;letter-spacing:-0.8px"><span style="color:#6e6e6e">     2:</span> ( To run this code anyway you might have to Touch Off the Z axis)</div>
<div class="t mono" style="left:4px;top:653px;font-size:13px;line-height:14px;letter-spacing:-0.8px"><span style="color:#6e6e6e">     3:</span> ( depending on your setup. As if you had some material in your mill... )</div>
<div class="t mono" style="left:4px;top:667px;font-size:13px;line-height:14px;letter-spacing:-0.8px"><span style="color:#6e6e6e">     4:</span> ( Hint jog the Z axis down a bit then touch off )</div>
<div class="t mono" style="left:4px;top:681px;font-size:13px;line-height:14px;letter-spacing:-0.8px"><span style="color:#6e6e6e">     5:</span> ( Also press the Toggle Skip Lines with "/" to see that part )</div>
<div class="t mono" style="left:4px;top:695px;font-size:13px;line-height:14px;letter-spacing:-0.8px"><span style="color:#6e6e6e">     6:</span> ( If the program is too big or small for your machine, change the scale below )</div>
<div class="t mono" style="left:4px;top:709px;font-size:13px;line-height:14px;letter-spacing:-0.8px"><span style="color:#6e6e6e">     7:</span> ( LinuxCNC 19/1/2012 2:13:51 PM )</div>
<div class="t mono" style="left:4px;top:723px;font-size:13px;line-height:14px;letter-spacing:-0.8px"><span style="color:#6e6e6e">     8:</span> #&lt;depth&gt;=2.0</div>
<div class="t mono" style="left:4px;top:737px;font-size:13px;line-height:14px;letter-spacing:-0.8px"><span style="color:#6e6e6e">     9:</span> #&lt;scale&gt;=1.0</div>

<!-- ===== STATUS BAR ===== -->

<div class="sunk" style="left:0;top:754px;width:118px;height:20px;background:#d9d9d9"></div>
<div class="t" style="left:3px;top:757px;letter-spacing:0.2px">WŁĄCZONY</div>
<div class="sunk" style="left:118px;top:754px;width:956px;height:20px;background:#d9d9d9"></div>
<div class="t" style="left:121px;top:757px;letter-spacing:0.2px">Brak narzędzia</div>
<div class="sunk" style="left:1074px;top:754px;width:206px;height:20px;background:#d9d9d9"></div>
<div class="t" style="left:1077px;top:757px;letter-spacing:0.15px">Pozycja: Względna Aktualna</div>


<!-- ===== TASKBAR ===== -->
<div class="a" style="left:0;top:774px;width:1280px;height:1px;background:#8e8a86"></div>
<div class="a" style="left:0;top:775px;width:1280px;height:25px;background:#edeceb"></div>

<div class="a" style="left:1px;top:777px;width:22px;height:22px;border:1px solid #a9a6a2;border-radius:3px;background:linear-gradient(#fdfdfd,#e4e3e1)"></div>
<svg class="a" style="left:3px;top:780px" width="18" height="17" viewBox="0 0 18 17">
 <path d="M1.5 2.5 h5 l1.5 1.5 h8.5 v11.5 h-15 z" fill="#8e8f70" stroke="#5a5b45" stroke-width="1"/>
 <rect x="2.5" y="6" width="13" height="9" fill="#c7c8a8"/>
 <rect x="7" y="8" width="4" height="5" fill="none" stroke="#6a6b50" stroke-width="1"/>
</svg>
<div class="a" style="left:27px;top:779px;width:5px;height:18px;background:radial-gradient(circle,#b0aea9 0.6px,transparent 0.9px) 0 0/3px 3px"></div>
<div class="a" style="left:35px;top:777px;width:188px;height:22px;border:1px solid #a9a6a2;border-radius:3px;background:linear-gradient(#fefefe,#ebeae8)"></div>
<svg class="a" style="left:42px;top:781px" width="16" height="15" viewBox="0 0 16 15">
 <rect x="0.5" y="0.5" width="15" height="14" rx="1" fill="#d9d9d9" stroke="#555"/>
 <rect x="2" y="2" width="12" height="11" fill="#2c3432"/>
 <path d="M3.5 4 L5.5 5.5 L3.5 7" fill="none" stroke="#ddd" stroke-width="0.9"/>
 <rect x="6" y="8" width="2.5" height="1" fill="#ccc"/>
</svg>
<div class="t" style="left:67px;top:780px;font-size:14px;line-height:14px">cnc@cnc: ~/Pobrane</div>
<div class="a" style="left:226px;top:777px;width:188px;height:22px;border:1px solid #9a9793;border-radius:3px;background:linear-gradient(#d6d5d2,#c9c7c3)"></div>
<svg class="a" style="left:232px;top:778px" width="18" height="20" viewBox="0 0 18 20">
 <text x="3" y="15" font-family="Liberation Serif" font-weight="bold" font-size="17" fill="#000">X</text>
 <rect x="1.5" y="3" width="1" height="12" fill="#333"/><rect x="3" y="16" width="12" height="1" fill="#333"/>
</svg>
<div class="t" style="left:258px;top:780px;font-size:14px;line-height:14px">axis.ngc</div>
<!-- workspace switcher -->
<div class="a" style="left:1147px;top:778px;width:133px;height:21px;background:#aaa6a2;border-radius:3px"></div>
<div class="a" style="left:1147px;top:778px;width:33px;height:21px;background:#87a8d8;border:1px solid #fff;border-radius:2px 0 0 2px"></div>
<div class="a" style="left:1212px;top:779px;width:1px;height:19px;background:#f2f2f2"></div>
<div class="a" style="left:1245px;top:779px;width:1px;height:19px;background:#f2f2f2"></div>
<svg class="a" style="left:1154px;top:780px" width="18" height="17" viewBox="0 0 18 17">
 <text x="3" y="14" font-family="Liberation Serif" font-weight="bold" font-size="16" fill="#000">X</text>
 <rect x="1.5" y="2" width="1" height="11" fill="#222"/><rect x="3" y="15" width="12" height="1" fill="#222"/>
 <rect x="6" y="5" width="6" height="2.5" fill="#fff"/>
</svg>


<!-- ===== DIALOG ===== -->

<div class="a" style="left:525px;top:253px;width:230px;height:133px;background:#d9d9d9;border:1px solid #4a4a4a;border-top:none;border-radius:5px 5px 0 0"></div>
<div class="a" style="left:526px;top:275px;width:228px;height:110px;border-style:solid;border-color:#d9d9d9 #eeeeec #eeeeec #eeeeec;border-width:0 3px 3px 2px"></div>
<div class="a" style="left:525px;top:253px;width:230px;height:22px;border-radius:5px 5px 0 0;background:linear-gradient(#a4c0e8,#8aaddd 50%,#6e97d0);border:1px solid #5a80b8;border-bottom:1px solid #4a70a8"></div>
<svg class="a" style="left:530px;top:256px" width="18" height="16" viewBox="0 0 18 16">
 <defs><linearGradient id="ig" x1="0" y1="0" x2="1" y2="1"><stop offset="0" stop-color="#9a9a9a"/><stop offset="1" stop-color="#5e5e5e"/></linearGradient></defs>
 <rect x="1.5" y="1.5" width="14" height="12" fill="url(#ig)" stroke="#fff" stroke-width="1.2"/>
 <circle cx="14" cy="12.5" r="1.6" fill="#ddd" stroke="#555" stroke-width="0.6"/>
</svg>
<div class="t" style="left:576px;top:257px;font-size:14px;line-height:14px;font-weight:bold;color:#fff;letter-spacing:0.9px;text-shadow:0 0 1.5px #203c68,0 1px 1px #203c68">Polowa dystansu</div>
<svg class="a" style="left:732px;top:255px" width="18" height="18" viewBox="0 0 18 18">
 <rect x="1.5" y="1.5" width="15" height="15" rx="3" fill="none" stroke="#3a5e98" stroke-width="1"/>
 <path d="M5 5 L13 13 M13 5 L5 13" stroke="#fff" stroke-width="2" stroke-linecap="round"/>
 <path d="M5 5 L13 13 M13 5 L5 13" stroke="#3a5e98" stroke-width="0.6"/>
</svg>
<div class="t" style="left:542px;top:285px;line-height:14px;letter-spacing:0.2px">Na pewno ustawic srodek
osi X ?</div>
<div class="sunk1" style="left:542px;top:343px;width:92px;height:26px"></div>
<div class="raised" style="left:545px;top:346px;width:87px;height:20px"></div>
<div class="t" style="left:580px;top:349px">Ok</div>
<div class="raised" style="left:649px;top:346px;width:86px;height:20px"></div>
<div class="t" style="left:673px;top:349px;letter-spacing:0.3px">Anuluj</div>


</body></html>
